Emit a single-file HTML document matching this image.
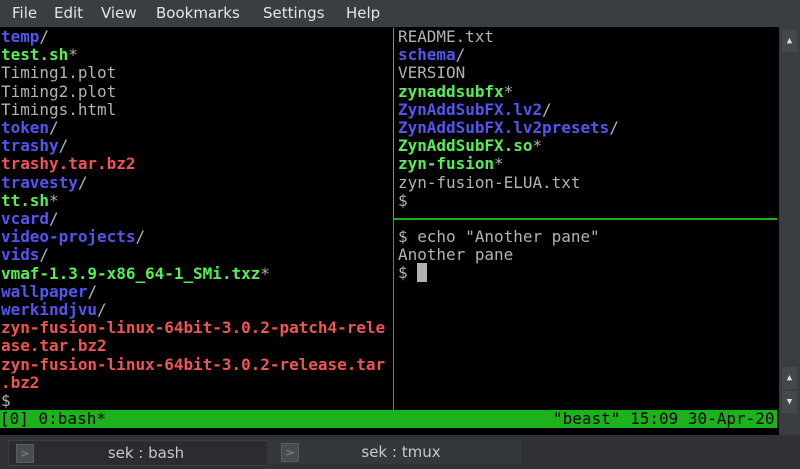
<!DOCTYPE html>
<html><head><style>
body{margin:0;width:800px;height:469px;background:#000;overflow:hidden;position:relative;font-family:"DejaVu Sans Mono","Liberation Mono",monospace;}
#menu{position:absolute;left:0;top:0;width:800px;height:27px;background:#3b3e41;color:#e4e4e4;font-family:"DejaVu Sans","Liberation Sans",sans-serif;font-size:15px;}
#menu span{position:absolute;top:4px}
.pane{position:absolute;font-size:16px;line-height:18.2px;white-space:pre;color:#b2b2b2;letter-spacing:-0.03px}
.b{color:#5454f0;font-weight:bold}.g{color:#55ee55;font-weight:bold}.r{color:#f05454;font-weight:bold}.w{color:#b2b2b2}
#status{position:absolute;left:0;top:410px;width:777px;height:18px;background:#1cb21c;color:#000;font-size:16px;line-height:18px;white-space:pre}
#sb{position:absolute;left:779px;top:27px;width:21px;height:408px;background:#3a3d41}
#tabs{position:absolute;left:0;top:435px;width:800px;height:34px;background:#2f3134}
.tab{position:absolute;top:5px;height:24px;font-family:"DejaVu Sans","Liberation Sans",sans-serif;font-size:15px;color:#c8c8c8;text-align:center;line-height:24px}
.btn{position:absolute;top:3px;width:16px;height:17px;background:#4a4d50;border:1px solid #5a5d60;color:#888;font-size:11px;line-height:17px}
</style></head><body>
<div id="menu"><span style="left:12px">File</span><span style="left:54px">Edit</span><span style="left:101px">View</span><span style="left:156px">Bookmarks</span><span style="left:263px">Settings</span><span style="left:346px">Help</span></div>
<div class="pane" style="left:1px;top:28px"><span class="b">temp</span>/
<span class="g">test.sh</span>*
Timing1.plot
Timing2.plot
Timings.html
<span class="b">token</span>/
<span class="b">trashy</span>/
<span class="r">trashy.tar.bz2</span>
<span class="b">travesty</span>/
<span class="g">tt.sh</span>*
<span class="b">vcard</span>/
<span class="b">video-projects</span>/
<span class="b">vids</span>/
<span class="g">vmaf-1.3.9-x86_64-1_SMi.txz</span>*
<span class="b">wallpaper</span>/
<span class="b">werkindjvu</span>/
<span class="r">zyn-fusion-linux-64bit-3.0.2-patch4-rele</span>
<span class="r">ase.tar.bz2</span>
<span class="r">zyn-fusion-linux-64bit-3.0.2-release.tar</span>
<span class="r">.bz2</span>
$</div>
<div style="position:absolute;left:393px;top:28px;width:1px;height:191px;background:#888"></div>
<div style="position:absolute;left:393px;top:219px;width:1px;height:191px;background:#1cb21c"></div>
<div style="position:absolute;left:394px;top:218px;width:383px;height:2px;background:#1cb21c"></div>
<div class="pane" style="left:398px;top:28px">README.txt
<span class="b">schema</span>/
VERSION
<span class="g">zynaddsubfx</span>*
<span class="b">ZynAddSubFX.lv2</span>/
<span class="b">ZynAddSubFX.lv2presets</span>/
<span class="g">ZynAddSubFX.so</span>*
<span class="g">zyn-fusion</span>*
zyn-fusion-ELUA.txt
$</div>
<div class="pane" style="left:398px;top:228px">$ echo "Another pane"
Another pane
$ <span style="background:#b2b2b2"> </span></div>
<div id="status">[0] 0:bash*<span style="position:absolute;left:553px">"beast" 15:09 30-Apr-20</span></div>
<div id="sb"><div style="position:absolute;left:3px;top:3px;width:15px;height:22px;color:#ddd;font-size:9px;text-align:center;line-height:22px;background:#44474b">▲</div><div style="position:absolute;left:3px;top:340px;width:15px;height:22px;color:#ddd;font-size:9px;text-align:center;line-height:22px;background:#44474b">▲</div><div style="position:absolute;left:3px;top:364px;width:15px;height:22px;color:#ddd;font-size:9px;text-align:center;line-height:22px;background:#44474b">▼</div></div>
<div id="tabs">
<div class="tab" style="left:8px;width:258px;background:#2a2c2f;border:1px solid #3c3f42"><div class="btn" style="left:7px">&gt;</div><span style="position:relative;left:8px">sek : bash</span></div>
<div class="tab" style="left:269px;width:252px;background:#35383b"><div class="btn" style="left:12px">&gt;</div><span style="position:relative;left:6px">sek : tmux</span></div>
</div>
</body></html>
